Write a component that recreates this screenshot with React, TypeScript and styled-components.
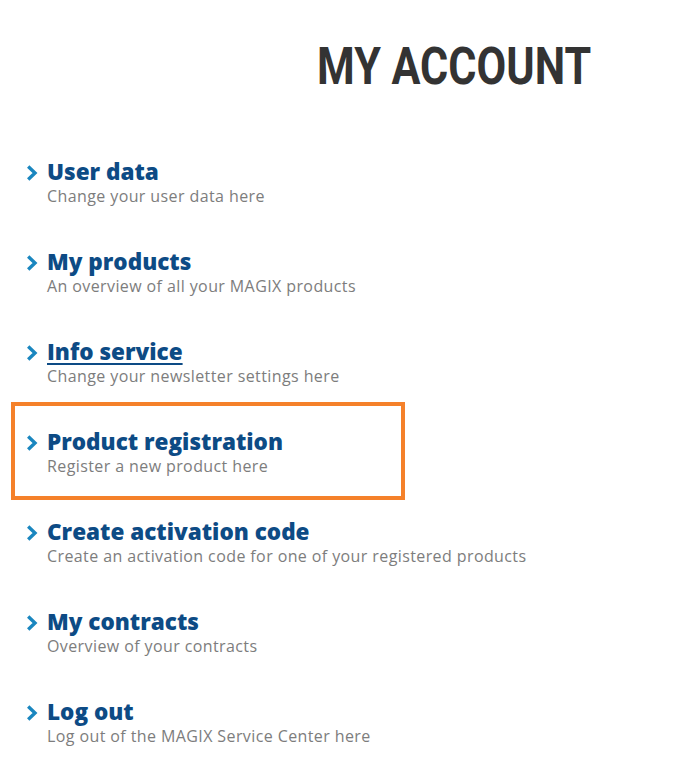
import React from "react";
import styled, { createGlobalStyle } from "styled-components";

const Global = createGlobalStyle`
  html, body { margin: 0; padding: 0; background: #ffffff; }
  body { font-family: "Open Sans", "Liberation Sans", sans-serif; }
`;

const Page = styled.div`
  width: 696px;
  height: 761px;
  background: #fff;
  display: flex;
  flex-direction: column;
`;

const Header = styled.header`
  height: 80px;
  padding: 38px 0 0 317px;
  box-sizing: border-box;
`;

const Heading = styled.h1`
  display: inline-block;
  margin: 0;
  font-family: "Roboto", "Liberation Sans", sans-serif;
  font-weight: 700;
  font-size: 51px;
  line-height: 58px;
  color: #333333;
  letter-spacing: 0px;
  white-space: nowrap;
  transform: scaleX(0.845);
  transform-origin: left center;
`;

const List = styled.ul`
  list-style: none;
  margin: 0;
  padding: 79px 0 0 0;
  display: flex;
  flex-direction: column;
`;

const Item = styled.li<{ $highlight?: boolean }>`
  position: relative;
  height: 90px;
  padding-left: 26px;
  box-sizing: border-box;
  &::before {
    content: "";
    display: ${(p) => (p.$highlight ? "block" : "none")};
    position: absolute;
    left: 11px;
    top: -27px;
    width: 394px;
    height: 98px;
    box-sizing: border-box;
    border: 4px solid #f5812a;
    pointer-events: none;
  }
`;

const Row = styled.div`
  display: flex;
  align-items: flex-start;
  gap: 9px;
`;

const Chevron = styled.svg`
  flex: none;
  width: 12px;
  height: 16px;
  margin-top: 6px;
`;

const Texts = styled.div`
  display: flex;
  flex-direction: column;
`;

const Title = styled.a<{ $underline?: boolean }>`
  font-family: "Open Sans", sans-serif;
  font-weight: 800;
  font-size: 22.5px;
  line-height: 26px;
  color: #0d4b85;
  text-decoration: ${(p) => (p.$underline ? "underline" : "none")};
  text-decoration-thickness: 2px;
  text-underline-offset: 3px;
  cursor: pointer;
`;

const Desc = styled.span`
  font-family: "Open Sans", sans-serif;
  font-size: 16px;
  line-height: 22px;
  letter-spacing: 0.4px;
  color: #7d7d7d;
`;

const items = [
  { t: "User data", d: "Change your user data here" },
  { t: "My products", d: "An overview of all your MAGIX products" },
  { t: "Info service", d: "Change your newsletter settings here", u: true },
  { t: "Product registration", d: "Register a new product here", h: true },
  { t: "Create activation code", d: "Create an activation code for one of your registered products" },
  { t: "My contracts", d: "Overview of your contracts" },
  { t: "Log out", d: "Log out of the MAGIX Service Center here" },
];

export default function App() {
  return (
    <Page>
      <Global />
      <Header>
        <Heading>MY ACCOUNT</Heading>
      </Header>
      <List>
        {items.map((it) => (
          <Item key={it.t} $highlight={it.h}>
            <Row>
              <Chevron viewBox="0 0 12 16">
                <path d="M2.2 1.5 L9 8 L2.2 14.5" fill="none" stroke="#1a86bf" strokeWidth="3.4" />
              </Chevron>
              <Texts>
                <Title $underline={it.u}>{it.t}</Title>
                <Desc>{it.d}</Desc>
              </Texts>
            </Row>
          </Item>
        ))}
      </List>
    </Page>
  );
}
